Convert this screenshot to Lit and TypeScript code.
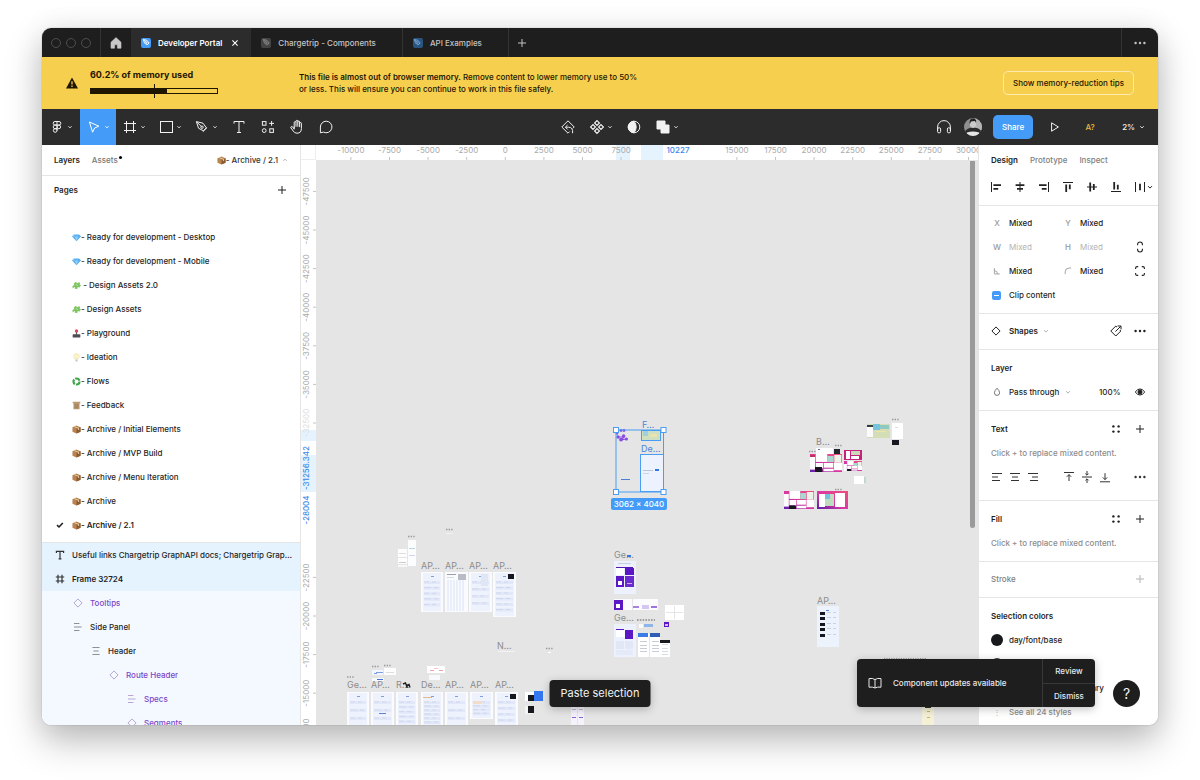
import { LitElement, html, svg, css, nothing } from "lit";
import { customElement, state } from "lit/decorators.js";
import { classMap } from "lit/directives/class-map.js";

/* ---------- icons ---------- */

const glyphs: Record<string, any> = {
  home: svg`<path d="M8 2.6 3 7.2V13.2H6.6V9.8H9.4V13.2H13V7.2Z" fill="currentColor" stroke="currentColor" stroke-width=".6" stroke-linejoin="round"/>`,
  close: svg`<path d="M5.4 5.4l5.2 5.2M10.6 5.4l-5.2 5.2" stroke-width="1.1"/>`,
  plus: svg`<path d="M8 4v8M4 8h8"/>`,
  chevron: svg`<path d="M6 7.1l2 2 2-2"/>`,
  chevronUp: svg`<path d="M6 9l2-2 2 2"/>`,
  dots: svg`<g fill="currentColor" stroke="none"><circle cx="3.6" cy="8" r="1.2"/><circle cx="8" cy="8" r="1.2"/><circle cx="12.4" cy="8" r="1.2"/></g>`,
  warning: svg`<path d="M8 2.4 14 13.4H2Z" fill="currentColor" stroke="none"/><path d="M8 6.2v3.4M8 10.6v1.3" stroke="#f7cf4f" stroke-width="1.3"/>`,
  figma: svg`<path d="M8 2.5H6a1.8 1.8 0 0 0 0 3.6h2M8 2.5h2a1.8 1.8 0 0 1 0 3.6H8M8 6.1H6a1.8 1.8 0 0 0 0 3.6h2M8 2.5v9.2M6 9.7a1.8 1.8 0 1 0 2 1.8V9.7ZM8 7.9a1.8 1.8 0 1 0 3.6 0 1.8 1.8 0 0 0-3.6 0Z"/>`,
  move: svg`<path d="M3.4 3 12.9 7.2 8.6 9 6.6 13.2Z" stroke-linejoin="round"/>`,
  frame: svg`<path d="M4.5 2v12M11.5 2v12M2 4.5h12M2 11.5h12"/>`,
  square: svg`<rect x="2.5" y="2.5" width="12" height="11"/>`,
  pen: svg`<path d="M2.4 2.6 9 4.2l3.3 4.6-3 3L4.5 9.2ZM2.6 2.8l4.6 4.6M8.9 12.7l4.2-4.2" stroke-linejoin="round"/><circle cx="8" cy="8.2" r="1.2"/>`,
  text: svg`<path d="M3 4.6V2.5h10v2.1M8 2.5v11M6 13.5h4"/>`,
  components: svg`<rect x="2.4" y="2.6" width="3.6" height="3.6"/><path d="M11.6 2v4.8M9.2 4.4H14"/><circle cx="4.2" cy="11.6" r="1.9"/><rect x="9.8" y="9.8" width="3.6" height="3.6"/>`,
  hand: svg`<path d="M5.2 8.4V3.6q0-1 .9-1t.9 1V7.4M7 3V2.3q0-1 .9-1t.9 1v5M8.8 2.9q0-.9.9-.9t.9.9v4.8M10.6 4.4q0-.9.9-.9t.9.9v5.2q0 4.6-4.4 4.6-2.6 0-3.8-2.2L1.9 8.8q-.4-1 .4-1.3t1.4.5l1.5 2.2V8" stroke-linejoin="round" stroke-linecap="round"/>`,
  comment: svg`<path d="M8.2 2.2a5.8 5.8 0 1 1-2.8 10.9L2.4 13.8V8a5.8 5.8 0 0 1 5.8-5.8Z" stroke-linejoin="round"/>`,
  reset: svg`<path d="M9.6 12.6 8 14.2 1.8 8 8 1.8 14.2 8l-1.4 1.4M12.6 14.2q.6-6-4-6H5.6M7.6 6 5.4 8.2 7.6 10.4"/>`,
  assets: svg`<path d="M8 1.6 10.4 4 8 6.4 5.6 4ZM4 5.6 6.4 8 4 10.4 1.6 8ZM12 5.6 14.4 8 12 10.4 9.6 8ZM8 9.6 10.4 12 8 14.4 5.6 12Z" stroke-width="1.2"/>`,
  mask: svg`<circle cx="8" cy="8" r="5.8"/><path d="M8 2.2a5.8 5.8 0 0 0 0 11.6q2.2-2.4 2.2-5.8T8 2.2Z" fill="currentColor"/>`,
  union: svg`<path d="M2 2h8v4h4v8H6v-4H2Z" fill="currentColor"/>`,
  headphones: svg`<path d="M1.6 12V8a6.4 6.4 0 0 1 12.8 0v4"/><rect x="1.6" y="8.8" width="3" height="5" rx="1.2"/><rect x="11.4" y="8.8" width="3" height="5" rx="1.2"/>`,
  play: svg`<path d="M4.6 3.8 11.4 8 4.6 12.2Z" stroke-linejoin="round"/>`,
  check: svg`<path d="M5 8.2 7 10l3.8-4" stroke-width="1.6"/>`,
  layerText: svg`<path d="M4.4 6V4.4h7.2V6M8 4.4v7.4M6.6 11.8h2.8" stroke-width="1.2"/>`,
  layerFrame: svg`<path d="M6 3.8v8.4M10 3.8v8.4M3.8 6h8.4M3.8 10h8.4" stroke-width="1.2"/>`,
  diamond: svg`<path d="M8 3.9 12.1 8 8 12.1 3.9 8Z"/>`,
  listLeft: svg`<path d="M4 4.5h5.4M4 8h7.6M4 11.5h5.4" stroke-width="1.2"/>`,
  listCenter: svg`<path d="M4.4 4.5h7.2M5.4 8h5.2M4.4 11.5h7.2" stroke-width="1.2"/>`,
  alignLeft: svg`<path d="M3.5 3v10"/><path d="M5.4 6.2h7.6M5.4 9.8h4.8" stroke-width="1.8"/>`,
  alignHCenter: svg`<path d="M8 3v10"/><path d="M3.6 6.2h8.8M5 9.8h6" stroke-width="1.8"/>`,
  alignRight: svg`<path d="M12.5 3v10"/><path d="M3 6.2h7.6M5.8 9.8h4.8" stroke-width="1.8"/>`,
  alignTop: svg`<path d="M3 3.5h10"/><path d="M6.2 5.4v7.6M9.8 5.4v4.8" stroke-width="1.8"/>`,
  alignVCenter: svg`<path d="M3 8h10"/><path d="M6.2 3.6v8.8M9.8 5v6" stroke-width="1.8"/>`,
  alignBottom: svg`<path d="M3 12.5h10"/><path d="M6.2 3v7.6M9.8 5.8v4.8" stroke-width="1.8"/>`,
  distribute: svg`<path d="M3.5 3v10M12.5 3v10"/><path d="M8 4.8v6.4" stroke-width="1.8"/>`,
  link: svg`<path d="M5.6 6.2V5.4A2.4 2.4 0 0 1 8 3a2.4 2.4 0 0 1 2.4 2.4v.8M5.6 9.8v.8A2.4 2.4 0 0 0 8 13a2.4 2.4 0 0 0 2.4-2.4v-.8" stroke-width="1.1"/>`,
  corners: svg`<path d="M3.6 6V5a1.5 1.5 0 0 1 1.5-1.4h1.1M9.8 3.6h1.1A1.5 1.5 0 0 1 12.4 5v1M12.4 10v1a1.5 1.5 0 0 1-1.5 1.4H9.8M6.2 12.4H5.1A1.5 1.5 0 0 1 3.6 11v-1" stroke-width="1.1"/>`,
  angle: svg`<path d="M5 4.6v6.8h6.2M5 7.6a3.8 3.8 0 0 1 3.6 3.8"/>`,
  radius: svg`<path d="M4.8 11.6V9a4.4 4.4 0 0 1 4.4-4.4h2.4"/>`,
  swap: svg`<path d="M9 4.2 7.8 3 2.8 8l5 5 5-5-1-1M7.4 8.6l5.2-5.2M9.6 3h3.4v3.4"/>`,
  drop: svg`<path d="M8 4.2q2.6 2.6 2.6 4.6a2.6 2.6 0 0 1-5.2 0q0-2 2.6-4.6Z"/>`,
  eye: svg`<path d="M3.2 8Q8 1.9 12.8 8 8 14.1 3.2 8Z"/><circle cx="8" cy="8" r="2" fill="currentColor"/>`,
  four: svg`<g fill="currentColor" stroke="none"><circle cx="5.4" cy="5.4" r="1.2"/><circle cx="10.6" cy="5.4" r="1.2"/><circle cx="5.4" cy="10.6" r="1.2"/><circle cx="10.6" cy="10.6" r="1.2"/></g>`,
  textLeft: svg`<path d="M3 4.5h10M3 8h6M3 11.5h8"/>`,
  textCenter: svg`<path d="M3 4.5h10M5 8h6M4 11.5h8"/>`,
  textRight: svg`<path d="M3 4.5h10M7 8h6M5 11.5h8"/>`,
  textTop: svg`<path d="M3 3.5h10M8 12V5.6M5.8 7.8 8 5.6l2.2 2.2"/>`,
  textMiddle: svg`<path d="M3 8h10M8 2v4M6.4 4.6 8 6.2l1.6-1.6M8 14v-4M6.4 11.4 8 9.8l1.6 1.6"/>`,
  textBottom: svg`<path d="M3 12.8h10M8 4.2v6.4M5.8 8.4 8 10.6l2.2-2.2"/>`,
  book: svg`<path d="M8 4.6Q5.6 2.8 2 3.6v8.6q3.6-.6 6 .8 2.4-1.4 6-.8V3.6q-3.6-.8-6 1V13" stroke-linejoin="round"/>`,
};

const icon = (name: string) =>
  html`<svg class="icon" viewBox="0 0 16 16" aria-hidden="true">${glyphs[name]}</svg>`;

const emojis: Record<string, any> = {
  gem: svg`<path d="M1.6 1.4h4.8L8 3.2 4 7.4 0 3.2Z" fill="#58aef0"/><path d="M2.4 3.2h3.2L4 7.2ZM1.6 1.4l.8 1.8H0Z" fill="#8fd0fb"/>`,
  puzzle: svg`<path d="M3.2.8 5 2l1-1 1.2.6-.4 1.6L8 4 6.4 6 5.2 5.2 4.6 7.4 2.4 6.6 2.8 5 .6 6.4.4 4.4 2 3.6 1.6 2.2Z" fill="#7cc560"/><path d="M3.4 2.6 5 4.4" stroke="#c3e8a8" stroke-width=".8"/>`,
  joystick: svg`<rect x=".6" y="4.6" width="6.8" height="3" rx=".6" fill="#4a4e55"/><path d="M4 2.6v2.6" stroke="#555" stroke-width="1"/><circle cx="4" cy="1.8" r="1.5" fill="#d84a5c"/>`,
  bulb: svg`<circle cx="4" cy="3" r="2.5" fill="#fbf3cf" stroke="#eadf9f" stroke-width=".5"/><rect x="3" y="5.8" width="2" height="1.7" fill="#c9c7bf"/>`,
  recycle: svg`<circle cx="4" cy="4" r="2.7" fill="none" stroke="#3fa44a" stroke-width="1.9" stroke-dasharray="4.6 1"/>`,
  scroll: svg`<path d="M.6.6h6.8v1.4h-.7v5.4H1.3V2H.6Z" fill="#b99a72"/><path d="M2.2 3.2h3.6M2.2 4.6h3.6M2.2 6h3.6" stroke="#8d6f4a" stroke-width=".5"/>`,
  box: svg`<path d="M4 .5 7.6 2v4L4 7.6.4 6V2Z" fill="#b98450"/><path d="M4 3.4V7.6L7.6 6V2Z" fill="#8b5d35"/><path d="M2 1.3 5.8 3v1.4" stroke="#e2c49b" stroke-width=".9" fill="none"/>`,
};

const emoji = (name: string) =>
  html`<svg class="emoji" viewBox="0 0 8 8" aria-hidden="true">${emojis[name]}</svg>`;

/* ---------- data ---------- */

const pages = [
  ["gem", "- Ready for development - Desktop"],
  ["gem", "- Ready for development - Mobile"],
  ["puzzle", "\u00a0- Design Assets 2.0"],
  ["puzzle", "- Design Assets"],
  ["joystick", "- Playground"],
  ["bulb", "- Ideation"],
  ["recycle", "- Flows"],
  ["scroll", "- Feedback"],
  ["box", "- Archive / Initial Elements"],
  ["box", "- Archive / MVP Build"],
  ["box", "- Archive / Menu Iteration"],
  ["box", "- Archive"],
  ["box", "- Archive / 2.1"],
];

const layers = [
  { icon: "layerText", name: "Useful links Chargetrip GraphAPI docs; Chargetrip GraphAPI playground", depth: 0, selected: true },
  { icon: "layerFrame", name: "Frame 32724", depth: 0, selected: true, bold: true },
  { icon: "diamond", name: "Tooltips", depth: 1, component: true },
  { icon: "listLeft", name: "Side Panel", depth: 1 },
  { icon: "listCenter", name: "Header", depth: 2 },
  { icon: "diamond", name: "Route Header", depth: 3, component: true },
  { icon: "listLeft", name: "Specs", depth: 4, component: true },
  { icon: "diamond", name: "Segments", depth: 4, component: true },
];

const tabs = [
  { name: "Developer Portal", tone: "bright", active: true },
  { name: "Chargetrip - Components", tone: "grey", active: false },
  { name: "API Examples", tone: "blue", active: false },
];

/* ---------- canvas drawing ---------- */

const r = (x: number, y: number, w: number, h: number, fill: string) =>
  svg`<rect x=${x} y=${y} width=${w} height=${h} fill=${fill}/>`;

const label = (x: number, y: number, text: string) =>
  svg`<text class="frame-name" x=${x} y=${y}>${text}</text>`;

const tiny = (x: number, y: number) =>
  svg`<path d=${`M${x} ${y}h7`} stroke="#999" stroke-width="1.4" stroke-dasharray="1.4 1.2"/>`;

/* A document frame: pale sheet with a title mark and rows of faint content. */
const sheet = (x: number, y: number, w: number, h: number, rows: number, dark = false) => {
  const lines = [];
  for (let i = 0; i < rows; i++) {
    const ly = y + 10 + i * ((h - 12) / rows);
    lines.push(r(x + 3, ly - 1, w - 6, 3, "rgba(205,216,244,.35)"));
    lines.push(svg`<path d=${`M${x + 3} ${ly}h${i % 2 ? 7 : 5}m3 0h4`} stroke="#c2cce0" stroke-width=".6"/>`);
  }
  return svg`${r(x, y, w, h, "#f9fbff")}${r(x + 2, y + 1, w - 4, h - 2, "#edf2fd")}
    ${r(x + 10, y + 4, 3, 1, "#7f9de0")}${lines}${dark ? r(x + w - 8, y + 2, 6, 5, "#15181f") : nothing}`;
};

/* A board of small screens laid over a magenta gradient. */
const board = (x: number, y: number, w: number, h: number) => svg`
  <rect x=${x} y=${y} width=${w} height=${h} fill="url(#dusk)"/>
  ${r(x, y + 3, w * 0.16, h * 0.7, "#fff")}
  ${r(x + w * 0.18, y, w * 0.36, h * 0.44, "#fff")}
  ${r(x + w * 0.54, y + 2, w * 0.2, h * 0.34, "#a9d7cf")}
  ${r(x + w * 0.76, y + 1, w * 0.22, h * 0.42, "#eef2e6")}
  ${r(x + w * 0.18, y + h * 0.5, w * 0.23, h * 0.3, "#fff")}
  ${r(x + w * 0.43, y + h * 0.5, w * 0.3, h * 0.26, "#fff")}
  ${r(x + w * 0.75, y + h * 0.48, w * 0.25, h * 0.42, "#fff")}
  ${r(x + w * 0.42, y + h * 0.82, w * 0.32, h * 0.14, "#fff")}
  ${r(x + w * 0.18, y + h * 0.8, w * 0.2, h * 0.2, "#1c1320")}`;

const handle = (x: number, y: number) =>
  svg`<rect x=${x - 2.5} y=${y - 2.5} width="5" height="5" fill="#fff" stroke="#4a9df5"/>`;

const artwork = svg`
  <defs>
    <linearGradient id="dusk" x1="1" y1="0" x2="0" y2="1">
      <stop offset="0" stop-color="#ef4f7b"/><stop offset=".55" stop-color="#d838a3"/><stop offset="1" stop-color="#5b1fa8"/>
    </linearGradient>
  </defs>

  ${tiny(446, 529.5)}${r(446, 533, 7, 1, "#f1f1f1")}
  ${tiny(408, 536.5)}${r(408, 540, 8, 26, "#fbfcfe")}${r(409, 548, 6, 1, "#bcd5df")}${r(409, 555, 6, 1, "#cdd8ea")}
  ${r(398, 549, 9, 8, "#fdfdfd")}${r(398, 558, 9, 6, "#fdfdfd")}${r(398, 565, 9, 2, "#f7f7f7")}${r(399, 553, 7, 1, "#ddd")}${r(399, 562, 7, 1, "#ccc")}

  ${label(421, 569, "AP…")}${label(445, 569, "AP…")}${label(469, 569, "AP…")}${label(493, 569, "AP…")}
  ${sheet(421, 572, 22, 40, 5)}
  ${r(445, 572, 23, 40, "#f9fbff")}
  ${[447, 450, 453, 456, 459, 462].map((x) => r(x, 580, 2, 31, "#e8eefa"))}
  ${r(447, 574, 9, 1, "#9a9fa8")}${r(447, 577, 7, 1, "#d5d9e2")}${r(458, 574, 8, 6, "#b9bcc4")}
  ${sheet(469, 572, 23, 40, 4)}${r(481, 574, 7, 12, "#e0e7f4")}
  ${sheet(493, 572, 23, 45, 6, true)}

  ${label(497, 649, "N…")}${r(498, 651, 17, 1, "#f3f3f3")}
  ${tiny(546, 648.5)}${r(548, 652, 3, 1, "#fff")}

  ${tiny(347, 677)}${tiny(372, 666.5)}${tiny(384, 665.5)}
  ${r(372, 670, 11, 5, "#f1f6ff")}${r(374, 673, 3, 1, "#7f9de0")}${r(376, 672, 7, 1, "#7f9de0")}
  ${r(384, 668, 12, 7, "#fdfdfd")}${r(386, 672, 8, 1, "#ddd")}${r(372, 678, 12, 3, "#f7faff")}${r(377, 679, 6, 1, "#4570d8")}
  ${r(427, 666, 18, 7, "#fff")}${r(430, 670, 4, 1, "#f0a3ad")}${r(434, 668, 4, 1, "#f7c4ca")}${r(439, 670, 4, 1, "#f0a3ad")}
  ${r(429, 675, 11, 5, "#f8f9fc")}

  ${label(347, 688, "Ge…")}${label(371, 688, "AP…")}${label(396, 688, "R…")}${label(421, 688, "De…")}
  ${label(445, 688, "AP…")}${label(470, 688, "AP…")}${label(495, 688, "AP…")}
  <path d="M403 684l2.500-1 1 2.500 2.500-1 1 3M406 687h2" stroke="#222" stroke-width="1.4" fill="none"/>
  ${sheet(347, 692, 22, 36, 3)}${sheet(371, 692, 23, 36, 3)}${sheet(396, 692, 22, 36, 5)}${sheet(421, 692, 22, 36, 6)}
  ${sheet(445, 692, 23, 36, 3)}${sheet(470, 692, 23, 27, 4)}${sheet(495, 692, 23, 36, 4, true)}
  ${r(473, 701, 8, 3, "#f4dcc8")}${r(423, 697, 9, 1, "#e5b88e")}${r(379, 713, 7, 1, "#5d83d6")}
  ${r(525, 692, 9, 9, "#fff")}${r(525, 706, 8, 8, "#f3f3f3")}${r(528, 695, 6, 6, "#16181d")}${r(528, 706, 6, 7, "#16181d")}${r(534, 691, 9, 10, "#3577f1")}

  ${label(614, 558, "Ge…")}${r(627, 555, 4, 2, "#3577e1")}
  ${r(614, 561, 22, 33, "#edf1fd")}${r(618, 563, 13, 1, "#c6cfe6")}${r(616, 567, 17, 1, "#5216b8")}${r(616, 568, 8, 7, "#fff")}
  ${r(625, 568, 9, 7, "#5b17c4")}${r(616, 576, 8, 11, "#5b17c4")}${r(625, 576, 9, 11, "#6a2bcf")}${r(618, 581, 4, 4, "#fff")}${r(627, 583, 5, 1, "#c9aef2")}
  ${r(614, 599, 44, 11, "#fcfbfe")}${r(614, 600, 9, 10, "#5b17c4")}${r(616, 604, 4, 4, "#fff")}
  ${r(633, 606, 6, 2, "#a583e3")}${r(642, 605, 7, 4, "#d5c7f2")}${r(651, 606, 6, 2, "#9a73df")}${r(632, 599, 1, 11, "#e5e5e5")}
  ${r(665, 605, 19, 15, "#fff")}${r(674, 606, 1, 13, "#e5e5e5")}${r(666, 612, 17, 1, "#e5e5e5")}
  ${label(614, 621, "Ge…")}<path d="M637 620h18" stroke="#888" stroke-width="1.4" stroke-dasharray="1.6 1.2"/>
  ${r(639, 624, 4, 4, "#fafafa")}${r(644, 624, 9, 3, "#8fb5ea")}${r(664, 622, 5, 5, "#5b17c4")}${r(665, 624, 3, 2, "#d4bff5")}
  ${r(614, 624, 22, 33, "#edf1fd")}${r(616, 630, 9, 7, "#fff")}${r(625, 630, 8, 9, "#5b17c4")}${r(616, 629, 8, 1, "#5b17c4")}
  ${r(616, 641, 8, 8, "#e2e7f5")}${r(625, 641, 8, 8, "#e2e7f5")}${r(616, 650, 17, 5, "#e5eaf8")}
  ${r(638, 633, 11, 24, "#fff")}${r(638, 633, 10, 4, "#3b7be6")}${r(650, 633, 10, 24, "#fff")}${r(650, 633, 10, 4, "#2f5fb4")}
  ${r(660, 640, 10, 17, "#fff")}${r(660, 640, 10, 3, "#16181d")}
  ${[641, 645, 648, 651].map((y) => svg`${r(640, y, 7, 1, "#c9ccd6")}${r(652, y, 7, 1, "#c9ccd6")}${r(662, y + 3, 6, 1, "#d9dbe2")}`)}
  ${r(571, 706, 6, 19, "#f6f2fb")}${r(578, 706, 6, 19, "#f6f2fb")}${r(572, 717, 4, 1, "#8f62d6")}${r(579, 717, 4, 1, "#8f62d6")}${r(572, 709, 4, 1, "#c4b5df")}${r(579, 709, 4, 1, "#c4b5df")}

  ${r(867, 424, 23, 14, "#d3ddb6")}${r(867, 425, 6, 12, "#fbfbfb")}${r(867, 425, 6, 2, "#333c44")}
  ${r(873, 424, 7, 6, "#74c4dc")}${r(880, 425, 9, 4, "#8fc9c2")}${r(876, 431, 10, 1, "#efe3a6")}
  ${tiny(892, 419.5)}${r(892, 423, 11, 16, "#fff")}${r(895, 427, 3, 1, "#ddd")}${r(892, 440, 7, 5, "#16181d")}

  ${label(816, 445, "B…")}${tiny(809, 451.5)}${tiny(835, 445.5)}
  ${board(810, 454, 32, 18)}${r(816, 448, 17, 6, "#fff")}${r(834, 449, 6, 5, "#24262d")}${r(818, 449, 2, 1, "#6e5fd0")}${r(810, 455, 5, 2, "#c3325c")}${r(815, 467, 7, 5, "#1c1320")}
  ${r(844, 450, 18, 10, "#c6217d")}${r(846, 451, 4, 8, "#fff")}${r(851, 451, 9, 4, "#c9d9b9")}${r(851, 456, 8, 3, "#fff")}${board(844, 461, 18, 10)}
  ${r(854, 476, 10, 8, "#fff")}${r(864, 477, 2, 6, "#bcd9cf")}
  ${tiny(835, 489.5)}
  ${board(784, 491, 30, 18)}${r(789, 506, 7, 3, "#16181d")}
  <rect x="817" y="491" width="31" height="18" fill="url(#dusk)"/>
  ${r(819, 494, 6, 13, "#fff")}${r(825, 494, 9, 12, "#bddcc0")}${r(825, 494, 5, 5, "#6fc3df")}${r(835, 493, 10, 14, "#fff")}

  ${label(817, 604, "AP…")}${r(817, 606, 22, 41, "#edf3fd")}${r(826, 610, 3, 1, "#5d83d6")}
  ${[612, 617, 623, 628, 634].map((y) => svg`${r(820, y, 5, 3, "#15181f")}${r(827, y, 4, 1, "#c8d2e8")}${r(833, y, 3, 1, "#c8d2e8")}`)}
  <path d="M884 658.5h43" stroke="#999" stroke-width="1.2" stroke-dasharray="1.2 1.2"/>
  ${r(922, 705, 12, 20, "#f3f0d6")}${r(925, 705, 6, 3, "#333")}${r(927, 711, 3, 1, "#c2b56a")}${r(927, 717, 3, 1, "#c2b56a")}

  <text class="frame-name picked" x="642" y="428">F…</text>
  ${r(641, 430, 19, 10, "#cfe0c0")}${r(643, 431, 5, 5, "#9fd0dc")}${r(650, 434, 7, 3, "#e9e3ae")}
  <rect x="641.5" y="430.5" width="19" height="10" fill="none" stroke="#4a9df5"/>
  <text class="frame-name picked" x="641" y="452">De…</text>
  ${r(640, 454, 23, 38, "#edf3fe")}${r(643, 470, 10, 1, "#b9c6dd")}${r(655, 469, 4, 2, "#3577e1")}${r(643, 473, 6, 1, "#cdd6e7")}
  <rect x="640.5" y="454.5" width="23" height="37" fill="none" stroke="#4a9df5"/>
  <g fill="#8a4de0"><circle cx="621" cy="430.5" r="1.4"/><circle cx="624" cy="430.5" r="1.4"/><circle cx="618" cy="437" r="1.7"/><circle cx="621" cy="439.6" r="1.9"/><circle cx="623.6" cy="436" r="1.7"/><circle cx="626.4" cy="439" r="1.6"/><circle cx="617" cy="433.6" r="1.2"/></g>
  <path d="M618 437h6l-3 3M621 440l5-1" stroke="#8a4de0" stroke-width="1.2" fill="none"/>
  ${r(621, 479, 9, 1, "#4a7fd8")}
  <rect x="616" y="430" width="47.5" height="62" fill="none" stroke="#4a9df5"/>
  ${handle(616, 430)}${handle(663.5, 430)}${handle(616, 492)}${handle(663.5, 492)}
  <rect x="611" y="498" width="56" height="12" rx="2" fill="#459cf8"/>
  <text class="size-badge" x="639" y="507">3062 × 4040</text>`;

const topTicks = Array.from({ length: 17 }, (_, i) => -10000 + i * 2500).filter((v) => v !== 10000 && v !== 12500);
const sideTicks = Array.from({ length: 15 }, (_, i) => -47500 + i * 2500).filter((v) => ![-30000, -27500, -25000].includes(v));
const topAt = (v: number) => 189.3 + (v / 2500) * 38.6;
const sideAt = (v: number) => 31.4 + ((v + 47500) / 2500) * 38.6;

@customElement("app-root")
export class AppRoot extends LitElement {
  @state() private currentPage = pages.length - 1;

  static styles = css`
    :host {
      display: block;
      box-sizing: border-box;
      height: 100vh;
      min-height: 480px;
      padding: 28px 42px 55px;
      overflow: hidden;
      background: #fff;
      color: #1f1f1f;
      font: 450 8px/12px Inter, "Noto Sans", sans-serif;
    }
    *, *::before { box-sizing: border-box; }
    button, input, select {
      margin: 0; padding: 0; border: 0; background: none; color: inherit; font: inherit;
      appearance: none; outline: none; min-width: 0;
    }
    button { cursor: pointer; display: inline-flex; align-items: center; justify-content: center; }
    ul { margin: 0; padding: 0; list-style: none; }
    h2, p { margin: 0; font-size: inherit; font-weight: inherit; }
    .icon { width: 16px; height: 16px; flex: none; fill: none; stroke: currentColor; stroke-width: 1; display: block; }
    .emoji { width: 9px; height: 9px; flex: none; }
    .window {
      position: relative;
      display: flex; flex-direction: column;
      height: 100%;
      border-radius: 9px;
      overflow: hidden;
      background: #fff;
    }
    .shadow { height: 100%; border-radius: 9px; box-shadow: 0 0 1px rgba(0,0,0,.5), 0 16px 36px rgba(0,0,0,.25), 0 3px 30px rgba(0,0,0,.08); }

    /* title bar */
    .titlebar { display: flex; height: 29px; flex: none; background: #1e1e1e; color: #c4c4c4; }
    .lights { display: flex; align-items: center; gap: 5px; padding: 0 9px; border-right: 1px solid #333; }
    .light { width: 10px; height: 10px; border: 1px solid #4d4d4d; border-radius: 50%; }
    .home { width: 30px; color: #c8c8c8; }
    .tab { display: flex; align-items: center; border-right: 1px solid #333; padding: 0 26px 0 10px; font-weight: 500; gap: 7px; }
    .tab.active { background: #2c2c2c; color: #fff; padding-right: 8px; border: 0; font-weight: 600; }
    .tab button { font-weight: inherit; white-space: nowrap; }
    .tab .close { margin-left: -2px; }
    .file { width: 10px; height: 10px; flex: none; border-radius: 2px; background: #459cf8; color: #fff; display: grid; place-items: center; }
    .file.grey { background: #444; color: #8c8c8c; }
    .file.blue { background: #2b5480; color: #78a7d6; }
    .file .icon { width: 9px; height: 9px; stroke-width: 1.6; }
    .new-tab { width: 27px; }
    .more-tabs { width: 37px; margin-left: auto; border-left: 1px solid #333; }

    /* memory banner */
    .banner { display: flex; height: 52px; flex: none; align-items: center; padding: 0 24px 0 22px; background: #f7cf4f; color: #1f1600; }
    .memory { width: 209px; margin-left: 10px; display: grid; gap: 2px; }
    .memory strong { font-size: 9px; line-height: 14px; font-weight: 700; }
    .meter { position: relative; width: 128px; height: 14px; display: grid; align-items: center; }
    .track { height: 6px; border: 1px solid #1f1600; }
    .fill { height: 100%; background: #1f1600; }
    .limit { position: absolute; left: 50%; top: 0; width: 1px; height: 14px; background: #1f1600; }
    .notice { flex: 1; min-width: 0; }
    .notice p { max-width: 340px; }
    .notice strong { font-weight: 600; }
    .tips { height: 24px; padding: 0 9px; border: 1px solid #fbe9ae; border-radius: 5px; font-weight: 500; white-space: nowrap; }

    /* toolbar */
    .toolbar { display: grid; grid-template-columns: 1fr auto 1fr; height: 36px; flex: none; background: #2c2c2c; color: #f2f2f2; }
    .group { display: flex; }
    .group.middle { padding-left: 38px; }
    .group.end { justify-content: flex-end; align-items: center; }
    .tool { width: 29px; }
    .middle .tool { width: 30px; }
    .end .tool { height: 36px; }
    .group .tool.menu { width: 36px; gap: 1px; }
    .tool.menu .icon + .icon { width: 12px; height: 12px; margin: 0 -2px; stroke-width: 1.3; }
    .tool.on { background: #459cf8; color: #fff; }
    .group .tool.main { width: 38px; }
    .avatar { width: 18px; height: 18px; margin: 0 11px 0 6px; border-radius: 50%; overflow: hidden; display: block; }
    .share { height: 24px; width: 40px; border-radius: 5px; background: #459cf8; color: #fff; font-weight: 500; }
    .present { width: 30px; margin-left: 7px; height: 36px; }
    .missing { width: 30px; margin-left: 5px; color: #e8b93c; font-weight: 500; height: 36px; }
    .zoom { margin: 0 9px 0 17px; font-weight: 500; height: 36px; }
    .zoom .icon { width: 14px; height: 14px; }

    /* body */
    .body { display: flex; flex: 1; min-height: 0; }
    .left { width: 259px; flex: none; display: flex; flex-direction: column; border-right: 1px solid #e5e5e5; overflow: hidden; }
    .left-tabs { display: flex; align-items: center; height: 31px; flex: none; padding: 0 8px 0 12px; border-bottom: 1px solid #e5e5e5; }
    .left-tabs b { font-weight: 600; }
    .assets { margin-left: 12px; color: #777; position: relative; }
    .assets::after { content: ""; position: absolute; width: 3px; height: 3px; border-radius: 50%; background: #000; top: 2px; right: -4px; }
    .page-switch { margin-left: auto; font-weight: 500; color: #333; }
    .page-switch .icon { width: 14px; height: 14px; stroke: #aaa; }
    .section-title { display: flex; align-items: center; justify-content: space-between; height: 28px; flex: none; padding: 0 10px 0 12px; font-weight: 600; }
    .pages { flex: none; padding: 21px 0 5px; border-bottom: 1px solid #e5e5e5; }
    .page { display: flex; width: 100%; height: 24px; justify-content: flex-start; text-align: left; padding-left: 10px; }
    .tick { width: 20px; height: 16px; }
    .page.current { font-weight: 600; }
    .layers { flex: 1; min-height: 0; overflow: hidden; background: #f4f9ff; }
    .layer { display: flex; align-items: center; height: 24px; gap: 4px; padding: 0 6px 0 calc(10px + var(--depth) * 18px); }
    .layer .icon { color: #8a8f99; }
    .layer span { overflow: hidden; text-overflow: ellipsis; white-space: nowrap; }
    .layer.selected { background: #e5f3ff; }
    .layer.selected .icon { color: #333; }
    .layer.bold { font-weight: 600; }
    .layer.component { color: #7b48c9; }
    .layer.component .icon { color: #b7a6d6; }

    /* stage */
    .stage { flex: 1; min-width: 0; display: grid; grid-template: 15px 1fr / 15px 1fr; background: #fff; }
    .ruler, .canvas { min-width: 0; min-height: 0; overflow: hidden; position: relative; }
    .ruler svg, .canvas svg { display: block; width: 100%; height: 100%; }
    .ruler text { font-size: 8px; font-weight: 400; fill: #aaa; text-anchor: middle; }
    .ruler .mark { fill: #3a86e8; font-weight: 500; }
    .ruler .faded { fill: #ddd; }
    .corner { background: #fff; border-right: 1px solid #eee; border-bottom: 1px solid #eee; }
    .canvas { background: #e5e5e5; }
    .scroll-thumb { position: absolute; top: 1px; right: 3px; width: 5px; height: 65%; border-radius: 0 0 3px 3px; background: #9a9a9a; }
    .frame-name { font-size: 9px; font-weight: 400; fill: #8c8c8c; }
    .frame-name.picked { fill: #4a86d8; }
    .size-badge { font-size: 8px; font-weight: 500; fill: #fff; text-anchor: middle; }

    /* inspector */
    .inspector { width: 180px; flex: none; border-left: 1px solid #e5e5e5; overflow: hidden; }
    .inspector section { padding: 6px 10px 6px 12px; border-bottom: 1px solid #e5e5e5; }
    .inspector .tabs-section { padding-top: 0; }
    .inspector .tight { padding-top: 5px; }
    .inspector .text-section { padding-bottom: 11px; }
    .panel-tabs { display: flex; gap: 12px; height: 30px; align-items: center; color: #808080; }
    .panel-tabs .chosen { color: #222; font-weight: 600; }
    .row { display: flex; align-items: center; height: 24px; }
    .aligns { margin-left: -3px; gap: 8px; color: #222; }
    .aligns button { flex: none; }
    .aligns .last .icon + .icon { margin-left: -6px; }
    .fields { display: grid; grid-template-columns: 71px 1fr 16px; height: 24px; align-items: center; }
    .field { display: flex; align-items: center; min-width: 0; color: #999; }
    .field > span { width: 12px; text-align: center; margin-right: 6px; }
    .field > .icon { width: 14px; height: 14px; margin: 0 5px 0 -1px; }
    .field input { flex: 1; width: 30px; color: #222; font-weight: 500; }
    .field input:disabled { color: #b3b3b3; font-weight: 400; }
    .check { gap: 7px; }
    .check input { width: 9px; height: 9px; margin: 0 1px; border-radius: 2px; background: #459cf8; display: grid; place-items: center; }
    .check input::before { content: ""; width: 5px; height: 1px; background: #fff; }
    .title { font-weight: 600; }
    .muted { color: #808080; font-weight: 500; }
    .hint { color: #8c8c8c; }
    .push { margin-left: auto; }
    .actions { display: flex; gap: 8px; margin-left: auto; }
    .shapes > .icon { margin: 0 5px 0 -3px; }
    .pale { color: #b3b3b3; }
    .blend { display: flex; align-items: center; }
    .blend > .icon { margin: 0 4px 0 -2px; color: #777; }
    .opacity { width: 24px; margin: 0 9px 0 auto; font-weight: 500; }
    .text-tools { color: #333; margin-left: -3px; }
    .text-tools button { width: 18px; }
    .text-tools .gap { margin-left: 18px; }
    .text-tools .push { width: 16px; }
    .swatch { width: 12px; height: 12px; border-radius: 50%; margin-right: 6px; flex: none; }
    .drag { width: 12px; margin-right: 6px; text-align: center; color: #bbb; }

    /* floating */
    .toast { position: absolute; right: 63px; bottom: 18px; width: 238px; height: 48px; display: flex; border-radius: 4px; background: #1e1e1e; color: #e8e8e8; box-shadow: 0 2px 8px rgba(0,0,0,.25); overflow: hidden; }
    .toast p { flex: 1; display: flex; align-items: center; gap: 10px; padding-left: 10px; }
    .toast-actions { width: 53px; display: grid; grid-template-rows: 1fr 1fr; border-left: 1px solid #383838; }
    .toast-actions button + button { border-top: 1px solid #383838; }
    .tip { position: absolute; left: 50%; bottom: 18px; transform: translateX(-50%); padding: 6px 11px; border-radius: 4px; background: #1e1e1e; color: #f2f2f2; font-size: 11px; font-weight: 400; line-height: 15px; white-space: nowrap; box-shadow: 0 2px 8px rgba(0,0,0,.25); }
    .help { position: absolute; right: 18px; bottom: 18px; width: 27px; height: 27px; border-radius: 50%; background: #1e1e1e; color: #f2f2f2; font-size: 14px; font-weight: 400; line-height: 16px; }
  `;

  private menuTool(name: string, title: string, extra = "") {
    return html`<button class="tool menu ${extra}" aria-label=${title}>${icon(name)}${icon("chevron")}</button>`;
  }

  private tool(name: string, title: string) {
    return html`<button class="tool" aria-label=${title}>${icon(name)}</button>`;
  }

  private field(mark: any, title: string, disabled = false) {
    return html`<label class="field">${mark}<input aria-label=${title} value="Mixed" ?disabled=${disabled} /></label>`;
  }

  private titleBar() {
    return html`<header class="titlebar">
      <div class="lights"><i class="light"></i><i class="light"></i><i class="light"></i></div>
      <button class="home" aria-label="Home">${icon("home")}</button>
      ${tabs.map(
        (t) => html`<div class=${classMap({ tab: true, active: t.active })}>
          <i class="file ${t.tone}">${icon("pen")}</i><button>${t.name}</button>
          ${t.active ? html`<button class="close" aria-label="Close tab">${icon("close")}</button>` : nothing}
        </div>`,
      )}
      <button class="new-tab" aria-label="New tab">${icon("plus")}</button>
      <button class="more-tabs" aria-label="More">${icon("dots")}</button>
    </header>`;
  }

  private banner() {
    const used = 60.2;
    return html`<div class="banner" role="alert">
      ${icon("warning")}
      <div class="memory">
        <strong>${used}% of memory used</strong>
        <div class="meter" role="meter" aria-valuenow=${used} aria-label="Memory">
          <div class="track"><div class="fill" style="width:${used}%"></div></div>
          <i class="limit"></i>
        </div>
      </div>
      <div class="notice">
        <p><strong>This file is almost out of browser memory.</strong> Remove content to lower memory use to 50% or less. This will ensure you can continue to work in this file safely.</p>
      </div>
      <button class="tips">Show memory-reduction tips</button>
    </div>`;
  }

  private toolbar() {
    return html`<nav class="toolbar" aria-label="Tools">
      <div class="group">
        ${this.menuTool("figma", "Main menu", "main")} ${this.menuTool("move", "Move", "on")}
        ${this.menuTool("frame", "Frame")} ${this.menuTool("square", "Rectangle")} ${this.menuTool("pen", "Pen")}
        ${this.tool("text", "Text")} ${this.tool("components", "Resources")} ${this.tool("hand", "Hand")}
        ${this.tool("comment", "Comment")}
      </div>
      <div class="group middle">
        ${this.tool("reset", "Reset instance")} ${this.menuTool("assets", "Component")} ${this.tool("mask", "Mask")}
        ${this.menuTool("union", "Union")}
      </div>
      <div class="group end">
        ${this.tool("headphones", "Audio")}
        <svg class="avatar" viewBox="0 0 18 18" role="img" aria-label="You">
          <rect width="18" height="18" fill="#8f8f8f"/><rect x="11" width="7" height="12" fill="#b5b5b5"/>
          <path d="M6 3q3-3 6 0v5l-3 3-3-3Z" fill="#ccc"/><path d="M5.500 4.500Q6 0 9.500.5T12 5L11 3 7 3.500 6 6Z" fill="#222"/>
          <path d="M1 13q4-4 8-3 5-1 8 3v3H1Z" fill="#2b2b2b"/><path d="M3 14.500q6-2 12 0V18H3Z" fill="#e5e5e5"/>
        </svg>
        <button class="share">Share</button>
        <button class="present" aria-label="Present">${icon("play")}</button>
        <button class="missing" aria-label="Missing fonts">A?</button>
        <button class="zoom">2%${icon("chevron")}</button>
      </div>
    </nav>`;
  }

  private leftPanel() {
    return html`<aside class="left">
      <div class="left-tabs">
        <button><b>Layers</b></button><button class="assets">Assets</button>
        <button class="page-switch">${emoji("box")}- Archive / 2.1${icon("chevronUp")}</button>
      </div>
      <div class="section-title"><h2>Pages</h2><button aria-label="Add page">${icon("plus")}</button></div>
      <ul class="pages">
        ${pages.map(
          ([e, name], i) => html`<li>
            <button class=${classMap({ page: true, current: i === this.currentPage })} @click=${() => (this.currentPage = i)}>
              <span class="tick">${i === this.currentPage ? icon("check") : nothing}</span>${emoji(e)}<span>${name}</span>
            </button>
          </li>`,
        )}
      </ul>
      <ul class="layers">
        ${layers.map(
          (l: any) => html`<li
            class=${classMap({ layer: true, selected: !!l.selected, bold: !!l.bold, component: !!l.component })}
            style="--depth:${l.depth}"
          >${icon(l.icon)}<span>${l.name}</span></li>`,
        )}
      </ul>
    </aside>`;
  }

  private stage() {
    return html`<main class="stage">
      <div class="corner"></div>
      <div class="ruler"><svg>
        <rect x="300" width="14" height="15" fill="#e5f3ff"/><rect x="325" width="22" height="15" fill="#e5f3ff"/>
        ${topTicks.map((v) => svg`<text x=${topAt(v)} y="8">${v}</text><path d=${`M${topAt(v)} 12v3`} stroke="#c4c4c4"/>`)}
        <text class="mark" x="362" y="8">10227</text>
      </svg></div>
      <div class="ruler"><svg>
        <rect y="270" width="15" height="11" fill="#e5f3ff"/><rect y="295" width="15" height="37" fill="#e5f3ff"/>
        ${sideTicks.map(
          (v) => svg`<text class=${v === -32500 ? "faded" : ""} transform=${`translate(8 ${sideAt(v)}) rotate(-90)`}>${v}</text>
            <path d=${`M12 ${sideAt(v)}h3`} stroke="#c4c4c4"/>`,
        )}
        <text class="mark" transform="translate(8 308) rotate(-90)">-31256.342</text>
        <text class="mark" transform="translate(8 350) rotate(-90)">-28004</text>
      </svg></div>
      <div class="canvas">
        <svg role="img" aria-label="Canvas"><g transform="translate(-316 -160)">${artwork}</g></svg>
        <div class="scroll-thumb"></div>
      </div>
    </main>`;
  }

  private inspector() {
    return html`<aside class="inspector">
      <section class="tabs-section">
        <div class="panel-tabs"><button class="chosen">Design</button><button>Prototype</button><button>Inspect</button></div>
        <div class="row aligns">
          ${["alignLeft", "alignHCenter", "alignRight", "alignTop", "alignVCenter", "alignBottom"].map(
            (n) => html`<button aria-label=${n}>${icon(n)}</button>`,
          )}
          <button class="last" aria-label="Distribute">${icon("distribute")}${icon("chevron")}</button>
        </div>
      </section>
      <section class="tight">
        <div class="fields">${this.field(html`<span>X</span>`, "X")}${this.field(html`<span>Y</span>`, "Y")}</div>
        <div class="fields">
          ${this.field(html`<span>W</span>`, "W", true)}${this.field(html`<span>H</span>`, "H", true)}
          <button aria-label="Constrain proportions">${icon("link")}</button>
        </div>
        <div class="fields">
          ${this.field(icon("angle"), "Rotation")}${this.field(icon("radius"), "Corner radius")}
          <button aria-label="Independent corners">${icon("corners")}</button>
        </div>
        <label class="row check"><input type="checkbox" .indeterminate=${true} />Clip content</label>
      </section>
      <section class="tight">
        <div class="row shapes">
          ${icon("diamond")}<span class="title">Shapes</span><span class="pale">${icon("chevron")}</span>
          <div class="actions"><button aria-label="Swap">${icon("swap")}</button><button aria-label="More">${icon("dots")}</button></div>
        </div>
      </section>
      <section>
        <h2 class="row title">Layer</h2>
        <div class="row">
          <label class="blend">${icon("drop")}<select aria-label="Blend mode"><option>Pass through</option></select><span class="pale">${icon("chevron")}</span></label>
          <input class="opacity" aria-label="Opacity" value="100%" size="4" /><button aria-label="Visibility">${icon("eye")}</button>
        </div>
      </section>
      <section class="text-section">
        <div class="row"><h2 class="title">Text</h2><div class="actions"><button aria-label="Styles">${icon("four")}</button><button aria-label="Add">${icon("plus")}</button></div></div>
        <p class="row hint">Click + to replace mixed content.</p>
        <div class="row text-tools">
          <button aria-label="Left">${icon("textLeft")}</button><button aria-label="Center">${icon("textCenter")}</button><button aria-label="Right">${icon("textRight")}</button>
          <button class="gap" aria-label="Top">${icon("textTop")}</button><button aria-label="Middle">${icon("textMiddle")}</button><button aria-label="Bottom">${icon("textBottom")}</button>
          <button class="push" aria-label="More">${icon("dots")}</button>
        </div>
      </section>
      <section>
        <div class="row"><h2 class="title">Fill</h2><div class="actions"><button aria-label="Styles">${icon("four")}</button><button aria-label="Add">${icon("plus")}</button></div></div>
        <p class="row hint">Click + to replace mixed content.</p>
      </section>
      <section class="tight">
        <div class="row"><h2 class="muted">Stroke</h2><div class="actions pale"><button aria-label="Add">${icon("plus")}</button></div></div>
      </section>
      <section>
        <h2 class="row title">Selection colors</h2>
        ${[["#17191c", "day/font/base"], ["#3c4046", "day/font/alt"], ["#f2f4f8", "day/background/primary"]].map(
          ([c, name]) => html`<div class="row"><i class="swatch" style="background:${c}"></i>${name}</div>`,
        )}
        <div class="row hint"><span class="drag">⋮</span>See all 24 styles</div>
      </section>
    </aside>`;
  }

  render() {
    return html`<div class="shadow"><div class="window">
      ${this.titleBar()} ${this.banner()} ${this.toolbar()}
      <div class="body">${this.leftPanel()} ${this.stage()} ${this.inspector()}</div>
      <div class="tip" role="status">Paste selection</div>
      <div class="toast" role="status">
        <p>${icon("book")}Component updates available</p>
        <div class="toast-actions"><button>Review</button><button>Dismiss</button></div>
      </div>
      <button class="help" aria-label="Help">?</button>
    </div></div>`;
  }
}
